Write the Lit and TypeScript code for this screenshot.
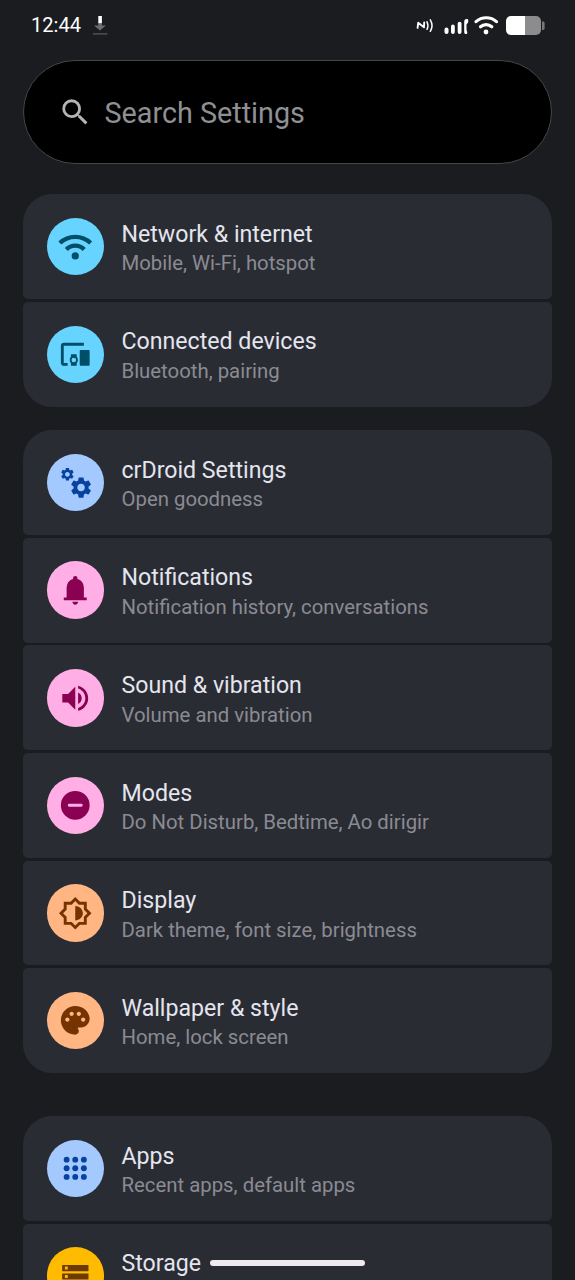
import { LitElement, html, svg, css, nothing } from "lit";
import { customElement, property } from "lit/decorators.js";

const GEAR =
  "M19.14 12.94c.04-.3.06-.61.06-.94 0-.32-.02-.64-.07-.94l2.03-1.58c.18-.14.23-.41.12-.61l-1.92-3.32c-.12-.22-.37-.29-.59-.22l-2.39.96c-.5-.38-1.03-.7-1.62-.94l-.36-2.54c-.04-.24-.24-.41-.48-.41h-3.84c-.24 0-.43.17-.47.41l-.36 2.54c-.59.24-1.13.57-1.62.94l-2.39-.96c-.22-.08-.47 0-.59.22L2.74 8.87c-.12.21-.08.47.12.61l2.03 1.58c-.05.3-.09.63-.09.94s.02.64.07.94l-2.03 1.58c-.18.14-.23.41-.12.61l1.92 3.32c.12.22.37.29.59.22l2.39-.96c.5.38 1.03.7 1.62.94l.36 2.54c.05.24.24.41.48.41h3.84c.24 0 .44-.17.47-.41l.36-2.54c.59-.24 1.13-.56 1.62-.94l2.39.96c.22.08.47 0 .59-.22l1.92-3.32c.12-.22.07-.47-.12-.61l-2.01-1.58zM12 15.6c-1.98 0-3.6-1.62-3.6-3.6s1.62-3.6 3.6-3.6 3.6 1.62 3.6 3.6-1.62 3.6-3.6 3.6z";

const ICONS: Record<string, unknown> = {
  wifi: svg`
    <g fill="none" stroke="currentColor" stroke-width="3">
      <path d="M1.3 9.7A15.5 15.5 0 0 1 22.7 9.7"/>
      <path d="M5.8 14.2A8.5 8.5 0 0 1 18.2 14.2"/>
    </g>
    <circle cx="12" cy="18.7" r="2.5"/>`,
  devices: svg`
    <path d="M4 6h14V4H4c-1.1 0-2 .9-2 2v12c0 1.1.9 2 2 2h2.7v-2H4z"/>
    <path fill-rule="evenodd" d="M13 12H9v1.78c-.4.4-.8 1.33-.8 2.22s.4 1.8.8 2.22V20h4v-1.78c.5-.45.8-1.34.8-2.22s-.3-1.8-.8-2.22zM11 17.6a1.6 1.6 0 1 1 0-3.2 1.6 1.6 0 0 1 0 3.2z"/>
    <rect x="15.1" y="9" width="6.9" height="11" rx=".7"/>`,
  gears: svg`
    <path transform="translate(6.55 6.45) scale(.46) translate(-12 -12)" d=${GEAR}/>
    <path transform="translate(16.05 15.7) scale(.73) translate(-12 -12)" d=${GEAR}/>`,
  bell: svg`<path d="M4 19v-2h2v-7q0-2.075 1.25-3.687Q8.5 4.7 10.5 4.2v-.7q0-.625.438-1.062Q11.375 2 12 2t1.062.438q.438.437.438 1.062v.7q2 .5 3.25 2.113Q18 7.925 18 10v7h2v2Zm8 3q-.825 0-1.412-.587Q10 20.825 10 20h4q0 .825-.587 1.413Q12.825 22 12 22Z"/>`,
  volume: svg`<path d="M3 9v6h4l5 5V4L7 9H3zm13.5 3c0-1.77-1.02-3.29-2.5-4.03v8.05c1.48-.73 2.5-2.25 2.5-4.02zM14 3.23v2.06c2.89.86 5 3.54 5 6.71s-2.11 5.85-5 6.71v2.06c4.01-.91 7-4.49 7-8.77s-2.99-7.86-7-8.77z"/>`,
  modes: svg`<path fill-rule="evenodd" d="M12 2a10 10 0 1 0 0 20 10 10 0 0 0 0-20zM7.8 11a1 1 0 0 0 0 2h8.4a1 1 0 0 0 0-2z"/>`,
  display: svg`<path fill-rule="evenodd" d="M20 15.31L23.31 12 20 8.69V4h-4.69L12 .69 8.69 4H4v4.69L.69 12 4 15.31V20h4.69L12 23.31 15.31 20H20zM18 14.48V18h-3.52L12 20.48 9.52 18H6v-3.52L3.52 12 6 9.52V6h3.52L12 3.52 14.48 6H18v3.52L20.48 12z"/><path d="M12 7v10c2.76 0 5.3-2.24 5.3-5s-2.54-5-5.3-5z"/>`,
  palette: svg`<path d="M12 2C6.49 2 2 6.49 2 12s4.49 10 10 10c1.38 0 2.5-1.12 2.5-2.5 0-.61-.23-1.2-.64-1.67-.08-.1-.13-.21-.13-.33 0-.28.22-.5.5-.5H16c3.31 0 6-2.69 6-6 0-4.96-4.49-9-10-9zm5.5 11c-.83 0-1.5-.67-1.5-1.5s.67-1.5 1.5-1.5 1.5.67 1.5 1.5-.67 1.5-1.5 1.5zm-3-4c-.83 0-1.5-.67-1.5-1.5S13.67 6 14.5 6s1.5.67 1.5 1.5S15.33 9 14.5 9zM5 11.5c0-.83.67-1.5 1.5-1.5s1.5.67 1.5 1.5S7.33 13 6.5 13 5 12.33 5 11.5zm6-4c0 .83-.67 1.5-1.5 1.5S8 8.33 8 7.5 8.67 6 9.5 6s1.5.67 1.5 1.5z"/>`,
  apps: svg`${[6, 12, 18].map((y) => [6, 12, 18].map((x) => svg`<circle cx=${x} cy=${y} r="2.05"/>`))}`,
  storage: svg`<path fill-rule="evenodd" d="M2.9 4.1h18.3v4.4H2.9zM4.8 5.3v2h2v-2zM2.9 10h18.3v4.3H2.9zM4.8 11.2v2h2v-2zM2.9 15.9h18.3v4.3H2.9zM4.8 17v2h2v-2z"/>`,
};

interface Entry {
  icon: string;
  tone: string;
  title: string;
  note?: string;
}

const GROUPS: Entry[][] = [
  [
    { icon: "wifi", tone: "cyan", title: "Network & internet", note: "Mobile, Wi-Fi, hotspot" },
    { icon: "devices", tone: "cyan", title: "Connected devices", note: "Bluetooth, pairing" },
  ],
  [
    { icon: "gears", tone: "blue", title: "crDroid Settings", note: "Open goodness" },
    { icon: "bell", tone: "pink", title: "Notifications", note: "Notification history, conversations" },
    { icon: "volume", tone: "pink", title: "Sound & vibration", note: "Volume and vibration" },
    { icon: "modes", tone: "pink", title: "Modes", note: "Do Not Disturb, Bedtime, Ao dirigir" },
    { icon: "display", tone: "orange", title: "Display", note: "Dark theme, font size, brightness" },
    { icon: "palette", tone: "orange", title: "Wallpaper & style", note: "Home, lock screen" },
  ],
  [
    { icon: "apps", tone: "blue", title: "Apps", note: "Recent apps, default apps" },
    { icon: "storage", tone: "yellow", title: "Storage" },
  ],
];

@customElement("settings-row")
export class SettingsRow extends LitElement {
  @property({ attribute: false }) entry!: Entry;

  static styles = css`
    :host {
      display: flex;
      align-items: center;
      height: 104.75px;
      box-sizing: border-box;
      padding-left: 23.5px;
      gap: 17.5px;
      background: #2a2c34;
      border-radius: 5px;
    }
    .disc {
      flex: none;
      width: 57.5px;
      height: 57.5px;
      border-radius: 50%;
      display: grid;
      place-items: center;
    }
    .disc svg { width: 34.5px; height: 34.5px; fill: currentColor; }
    .cyan { background: #67d4ff; color: #004e67; }
    .blue { background: #a4c9ff; color: #0842a0; }
    .pink { background: #ffafe6; color: #8a0052; }
    .orange { background: #ffb683; color: #743300; }
    .yellow { background: #ffbb00; color: #6d3a01; }
    .copy {
      display: flex;
      flex-direction: column;
      box-sizing: border-box;
      height: 61px;
      padding-top: 3.7px;
      white-space: nowrap;
    }
    .title { font-size: 23.15px; line-height: 30px; color: #e4e5ee; }
    .note { font-size: 20.35px; line-height: 28px; margin-top: -0.4px; color: #8a8b92; }
  `;

  render() {
    const e = this.entry;
    return html`
      <div class="disc ${e.tone}"><svg viewBox="0 0 24 24">${ICONS[e.icon]}</svg></div>
      <div class="copy">
        <span class="title">${e.title}</span>
        ${e.note ? html`<span class="note">${e.note}</span>` : nothing}
      </div>`;
  }
}

@customElement("status-bar")
export class StatusBar extends LitElement {
  static styles = css`
    :host {
      display: flex;
      justify-content: space-between;
      align-items: center;
      height: 50px;
      padding: 0 26px 0 31px;
      color: #fff;
    }
    .side { display: flex; align-items: center; }
    .time { font-size: 20.1px; line-height: 24px; }
    .download { width: 16px; height: 20px; margin-left: 10.5px; }
    .system { width: 134px; height: 24px; }
  `;

  render() {
    return html`
      <div class="side">
        <span class="time">12:44</span>
        <svg class="download" viewBox="0 0 16 20">
          <path d="M6.3 1h3.6v7.5H6.3z" fill="#fff"/>
          <path d="M6.3 8.500h3.6v2h4L8 15.500 2 10.500h4.300z" fill="#6c6c70"/>
          <path d="M.8 18.900h14.600" stroke="#5c5c60" stroke-width="1.200"/>
        </svg>
      </div>
      <svg class="system" viewBox="0 0 134 24">
        <g fill="none" stroke="#fff" stroke-linecap="round" stroke-linejoin="round">
          <path d="M2.6 14.800L3.200 9.800l5.800 4.500 .2-4.800" stroke-width="1.900"/>
          <path d="M12 8.700q1.800 3.900 0 7.600M15.300 6.900q3.400 5.800 0 11.400" stroke-width="1.500"/>
        </g>
        <g fill="#fff">
          <rect x="29.500" y="14.500" width="4" height="6.500" rx="2"/>
          <rect x="36" y="11.500" width="3.800" height="9.500" rx="1.900"/>
          <rect x="42.700" y="8.700" width="3.800" height="12.300" rx="1.900"/>
          <path d="M49.200 9c0-2 .8-2.800 2.400-3 1-.1 1.600.4 1.600 1.200v1.800c0 1.300-1.600 1.500-1.700 2.700v4.500c0 1.500.8 2 .8 3.300 0 1-.5 1.500-1.300 1.500-1.200 0-1.800-.9-1.800-2.300z"/>
          <circle cx="71" cy="19" r="2.400"/>
        </g>
        <g fill="none" stroke="#fff" stroke-width="3.200" stroke-linecap="round">
          <path d="M61 8.600a15.500 15.500 0 0 1 20.500 0"/>
          <path d="M65.500 13.800a8.600 8.600 0 0 1 11.300 0"/>
        </g>
        <path d="M96 3h14v19H96a5 5 0 0 1-5-5V8a5 5 0 0 1 5-5z" fill="#fff"/>
        <path d="M110 3h11a5 5 0 0 1 5 5v9a5 5 0 0 1-5 5h-11z" fill="#8c8c8e"/>
        <path d="M127 8.500h1.200a1.400 1.400 0 0 1 1.400 1.400v5.700a1.400 1.400 0 0 1-1.400 1.400H127z" fill="#77777a"/>
      </svg>`;
  }
}

@customElement("app-root")
export class AppRoot extends LitElement {
  static styles = css`
    :host {
      display: block;
      position: relative;
      height: 1280px;
      overflow: hidden;
      background: #1b1c1f;
      font-family: Roboto, sans-serif;
    }
    .search {
      display: flex;
      align-items: center;
      gap: 12px;
      box-sizing: border-box;
      height: 104px;
      margin: 10px 23px 0;
      padding: 0 34px;
      border: 1px solid #47474a;
      border-radius: 52px;
      background: #000;
      color: #8f9094;
      font-size: 28.75px;
    }
    .glass { width: 34.5px; height: 34.5px; fill: #b4b4b4; }
    .label { padding-top: 2px; }
    .group {
      display: flex;
      flex-direction: column;
      gap: 2.875px;
      margin: 23.5px 23px 0;
      border-radius: 29px;
      overflow: hidden;
    }
    .group:nth-of-type(2) { margin-top: 30.3px; }
    .group:nth-of-type(4) { margin-top: 43.2px; }
    .handle {
      position: absolute;
      left: 210px;
      top: 1260px;
      width: 155px;
      height: 5.5px;
      border-radius: 3px;
      background: #eeeaf0;
    }
  `;

  render() {
    return html`
      <status-bar></status-bar>
      <div class="search">
        <svg class="glass" viewBox="0 0 24 24"><path d="M15.5 14h-.79l-.28-.27A6.471 6.471 0 0 0 16 9.5 6.5 6.5 0 1 0 9.5 16c1.61 0 3.09-.59 4.23-1.57l.27.28v.79l5 4.99L20.49 19l-4.99-5zm-6 0C7.01 14 5 11.99 5 9.5S7.01 5 9.5 5 14 7.01 14 9.5 11.99 14 9.5 14z"/></svg>
        <span class="label">Search Settings</span>
      </div>
      ${GROUPS.map((g) => html`<div class="group">${g.map((e) => html`<settings-row .entry=${e}></settings-row>`)}</div>`)}
      <div class="handle"></div>`;
  }
}
